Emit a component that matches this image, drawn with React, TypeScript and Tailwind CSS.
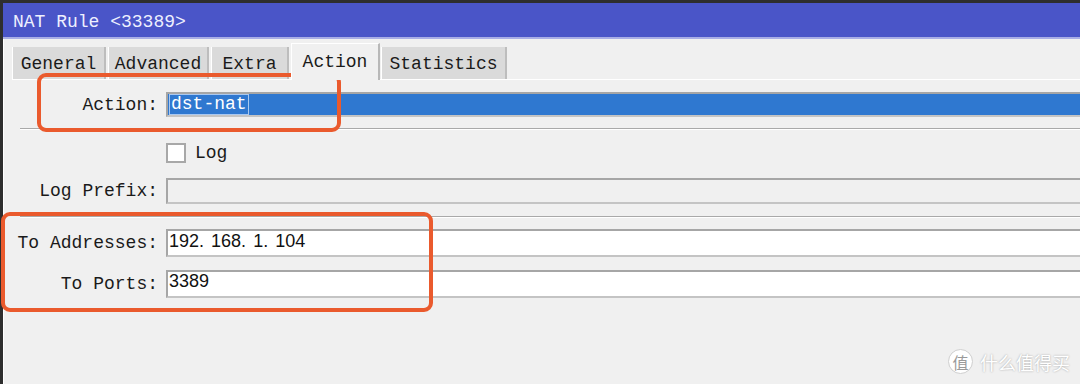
import React from "react";

const mono = { fontFamily: '"Liberation Mono", "DejaVu Sans Mono", monospace' };
const digits = { fontFamily: '"Liberation Sans", "DejaVu Sans", sans-serif' };

const tabs = [
  { label: "General", w: "w-[94px]" },
  { label: "Advanced", w: "w-[101px]" },
  { label: "Extra", w: "w-[78px]" },
  { label: "Action", w: "w-[89px]", active: true },
  { label: "Statistics", w: "w-[126px]" },
];

const Label = ({ children }: { children: React.ReactNode }) => (
  <div className="w-[146px] shrink-0 text-right text-[18px] leading-none text-[#1a1a1a]" style={mono}>
    {children}
  </div>
);

const Field = ({ children, className = "" }: { children?: React.ReactNode; className?: string }) => (
  <div
    className={`flex-1 -mr-[6px] flex items-center border-2 border-t-[#a6a6a6] border-l-[#a6a6a6] border-b-[#c4c4c4] border-r-[#c4c4c4] px-[1px] ${className}`}
  >
    {children}
  </div>
);

const Separator = () => (
  <div className="ml-[8px] border-t border-[#a9a9a9] border-b border-b-white" />
);

export default function App() {
  return (
    <div className="relative w-[1080px] h-[384px] overflow-hidden bg-[#f0f0f0]">
      <div className="h-full border-t-[3px] border-l-[3px] border-[#2e2e2e] flex flex-col">
        {/* title bar */}
        <div className="h-[36px] shrink-0 bg-[#4a55c8] border-b-2 border-b-[#a9aee6] flex items-center pl-[10px]">
          <span className="text-[18px] text-[#eef0ff] pt-[4px]" style={mono}>
            NAT Rule &lt;33389&gt;
          </span>
        </div>

        <div className="flex-1 border-l border-white pl-[8px]">
          {/* tabs */}
          <div className="flex items-end mt-[7px] h-[33px]">
            {tabs.map((t) =>
              t.active ? (
                <div
                  key={t.label}
                  className={`${t.w} h-[37px] -mb-[1px] mr-[1px] flex items-center justify-center pt-[1px] bg-[#f0f0f0] border-t border-l border-white border-r-2 border-r-[#b8b8b8] text-[18px] text-[#1a1a1a] z-10`}
                  style={mono}
                >
                  {t.label}
                </div>
              ) : (
                <div
                  key={t.label}
                  className={`${t.w} h-[32px] mr-[2px] flex items-center justify-center pt-[2px] bg-[#dadada] border-l border-white border-r-2 border-r-[#bdbdbd] text-[18px] text-[#1a1a1a]`}
                  style={mono}
                >
                  {t.label}
                </div>
              )
            )}
          </div>

          {/* panel */}
          <div className="border-t border-white bg-[#f0f0f0] h-full">
            <div className="flex items-center gap-[8px] mt-[12px] h-[25px]">
              <Label>Action:</Label>
              <Field className="bg-[#2f78d0] h-[25px]">
                <span className="border border-[#a9c8f0] px-[1px] text-[18px] leading-[19px] text-white" style={mono}>
                  dst-nat
                </span>
              </Field>
            </div>

            <div className="mt-[11px]">
              <Separator />
            </div>

            <div className="flex items-center gap-[8px] mt-[13px] h-[20px]">
              <div className="w-[146px] shrink-0" />
              <div className="w-[20px] h-[20px] bg-white border-2 border-[#a8a8a8]" />
              <span className="text-[18px] text-[#1a1a1a] ml-[1px]" style={mono}>
                Log
              </span>
            </div>

            <div className="flex items-center gap-[8px] mt-[15px] h-[26px]">
              <Label>Log Prefix:</Label>
              <Field className="bg-[#f0f0f0] h-[26px]" />
            </div>

            <div className="mt-[12px]">
              <Separator />
            </div>

            <div className="flex items-center gap-[8px] mt-[11px] h-[28px]">
              <Label>To Addresses:</Label>
              <Field className="bg-white h-[28px]">
                <span className="text-[18px] text-[#111] -mt-[4px]" style={digits}>
                  192<span className="mr-[7px]">.</span>168<span className="mr-[7px]">.</span>1
                  <span className="mr-[7px]">.</span>104
                </span>
              </Field>
            </div>

            <div className="flex items-center gap-[8px] mt-[13px] h-[28px]">
              <Label>To Ports:</Label>
              <Field className="bg-white h-[28px]">
                <span className="text-[18px] text-[#111] -mt-[5px]" style={digits}>
                  3389
                </span>
              </Field>
            </div>
          </div>
        </div>
      </div>

      {/* annotation boxes */}
      <div className="absolute left-[37px] top-[73px] w-[304px] h-[59px] border-[4px] border-[#ea5a2d] rounded-[9px]" />
      <div className="absolute left-[1px] top-[212px] w-[432px] h-[100px] border-[4px] border-[#ea5a2d] rounded-[9px]" />

      {/* watermark */}
      <div
        className="absolute right-[10px] bottom-[10px] flex items-center gap-[7px] text-white"
        style={{ fontFamily: '"Noto Sans CJK SC", sans-serif', textShadow: "0 0 2px rgba(0,0,0,0.35)" }}
      >
        <div className="w-[25px] h-[25px] rounded-full bg-white border border-[#cfcfcf] flex items-center justify-center text-[16px] text-[#9a9a9a] [text-shadow:none]">
          值
        </div>
        <span className="text-[18px] leading-none">什么值得买</span>
      </div>
    </div>
  );
}
